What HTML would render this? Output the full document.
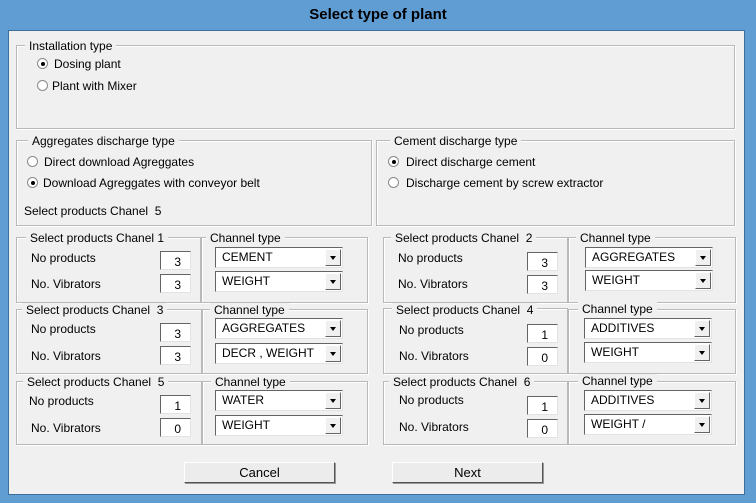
<!DOCTYPE html>
<html><head><style>
body{margin:0;width:756px;height:503px;background:#5f9dd3;font-family:"Liberation Sans",sans-serif;font-size:12px;color:#000;position:relative;overflow:hidden}
#client{position:absolute;left:8px;top:30px;width:735px;height:463px;background:#f0f0f0;border:1px solid #3c6f9c}
.title{position:absolute;left:0;width:756px;top:6px;text-align:center;font-weight:bold;font-size:15px;color:#000}
.g{position:absolute;box-sizing:border-box;border:1px solid #b9b9b9;box-shadow:inset 1px 1px 0 #fff,1px 1px 0 #fff}
.l{position:absolute;background:#f0f0f0;padding:0 4px;white-space:nowrap;line-height:14px}
.t{position:absolute;white-space:nowrap;line-height:14px}
.in{position:absolute;background:#fff;border:1px solid #646464;border-right-color:#e3e3e3;border-bottom-color:#e3e3e3;text-align:right;box-sizing:border-box;width:31px;height:19px;padding:3px 9px 0 0;line-height:14px}
.cb{position:absolute;width:128px;height:21px;box-sizing:border-box;background:#fff;border:1px solid #646464;border-right-color:#e3e3e3;border-bottom-color:#e3e3e3;padding:2px 0 0 6px;line-height:14px}
.cb i{position:absolute;right:1px;top:1px;width:16px;height:17px;background:#f0f0f0;border:1px solid #fff;border-right-color:#646464;border-bottom-color:#646464;box-sizing:border-box}
.cb i:after{content:"";position:absolute;left:4px;top:6px;border:3px solid transparent;border-top:4px solid #000;border-bottom:0}
.r{position:absolute;width:9px;height:9px;border-radius:50%;border:1px solid #8a8a8a;background:#fff}
.r.on:after{content:"";position:absolute;left:2.5px;top:2.5px;width:4px;height:4px;border-radius:50%;background:#000}
.btn{position:absolute;width:151px;height:21px;box-sizing:border-box;background:#ececec;border:1px solid #fff;border-right-color:#555;border-bottom-color:#555;box-shadow:1px 1px 0 #999;text-align:center;line-height:19px;font-size:13px}
</style></head><body>
<div class="title">Select type of plant</div>
<div id="client"></div>

<div class="g" style="left:16px;top:45px;width:719px;height:84px"></div>
<div class="l" style="left:25px;top:39px">Installation type</div>
<div class="r on" style="left:37px;top:58px"></div><div class="t" style="left:54px;top:57px">Dosing plant</div>
<div class="r" style="left:37px;top:80px"></div><div class="t" style="left:52px;top:79px">Plant with Mixer</div>

<div class="g" style="left:16px;top:140px;width:356px;height:86px"></div>
<div class="l" style="left:28px;top:134px">Aggregates discharge type</div>
<div class="r" style="left:27px;top:156px"></div><div class="t" style="left:44px;top:155px">Direct download Agreggates</div>
<div class="r on" style="left:27px;top:177px"></div><div class="t" style="left:43px;top:176px">Download Agreggates with conveyor belt</div>
<div class="t" style="left:24px;top:204px">Select products Chanel&nbsp; 5</div>

<div class="g" style="left:376px;top:140px;width:359px;height:86px"></div>
<div class="l" style="left:390px;top:134px">Cement discharge type</div>
<div class="r on" style="left:388px;top:156px"></div><div class="t" style="left:406px;top:155px">Direct discharge cement</div>
<div class="r" style="left:388px;top:177px"></div><div class="t" style="left:406px;top:176px">Discharge cement by screw extractor</div>

<!-- row 1 -->
<div class="g" style="left:16px;top:237px;width:185px;height:66px"></div>
<div class="g" style="left:201px;top:237px;width:167px;height:66px"></div>
<div class="l" style="left:26px;top:231px">Select products Chanel 1</div>
<div class="l" style="left:206px;top:231px">Channel type</div>
<div class="t" style="left:31px;top:251px">No products</div><div class="in" style="left:160px;top:251px">3</div>
<div class="t" style="left:31px;top:277px">No. Vibrators</div><div class="in" style="left:160px;top:274px">3</div>
<div class="cb" style="left:215px;top:247px">CEMENT<i></i></div>
<div class="cb" style="left:215px;top:271px">WEIGHT<i></i></div>

<div class="g" style="left:383px;top:237px;width:185px;height:66px"></div>
<div class="g" style="left:568px;top:237px;width:168px;height:66px"></div>
<div class="l" style="left:391px;top:231px">Select products Chanel&nbsp; 2</div>
<div class="l" style="left:576px;top:231px">Channel type</div>
<div class="t" style="left:398px;top:251px">No products</div><div class="in" style="left:527px;top:252px">3</div>
<div class="t" style="left:398px;top:277px">No. Vibrators</div><div class="in" style="left:527px;top:275px">3</div>
<div class="cb" style="left:585px;top:247px">AGGREGATES<i></i></div>
<div class="cb" style="left:585px;top:270px">WEIGHT<i></i></div>

<!-- row 2 -->
<div class="g" style="left:16px;top:309px;width:186px;height:65px"></div>
<div class="g" style="left:202px;top:309px;width:166px;height:65px"></div>
<div class="l" style="left:22px;top:303px">Select products Chanel&nbsp; 3</div>
<div class="l" style="left:210px;top:303px">Channel type</div>
<div class="t" style="left:31px;top:322px">No products</div><div class="in" style="left:160px;top:323px">3</div>
<div class="t" style="left:31px;top:349px">No. Vibrators</div><div class="in" style="left:160px;top:346px">3</div>
<div class="cb" style="left:215px;top:318px">AGGREGATES<i></i></div>
<div class="cb" style="left:215px;top:343px">DECR , WEIGHT<i></i></div>

<div class="g" style="left:383px;top:308px;width:185px;height:66px"></div>
<div class="g" style="left:568px;top:309px;width:168px;height:65px"></div>
<div class="l" style="left:392px;top:303px">Select products Chanel&nbsp; 4</div>
<div class="l" style="left:578px;top:302px">Channel type</div>
<div class="t" style="left:399px;top:323px">No products</div><div class="in" style="left:527px;top:324px">1</div>
<div class="t" style="left:399px;top:349px">No. Vibrators</div><div class="in" style="left:527px;top:347px">0</div>
<div class="cb" style="left:584px;top:318px">ADDITIVES<i></i></div>
<div class="cb" style="left:584px;top:342px">WEIGHT<i></i></div>

<!-- row 3 -->
<div class="g" style="left:16px;top:381px;width:186px;height:64px"></div>
<div class="g" style="left:202px;top:381px;width:166px;height:64px"></div>
<div class="l" style="left:23px;top:375px">Select products Chanel&nbsp; 5</div>
<div class="l" style="left:211px;top:375px">Channel type</div>
<div class="t" style="left:29px;top:394px">No products</div><div class="in" style="left:160px;top:395px">1</div>
<div class="t" style="left:31px;top:421px">No. Vibrators</div><div class="in" style="left:160px;top:418px">0</div>
<div class="cb" style="left:215px;top:390px">WATER<i></i></div>
<div class="cb" style="left:215px;top:415px">WEIGHT<i></i></div>

<div class="g" style="left:383px;top:381px;width:185px;height:64px"></div>
<div class="g" style="left:568px;top:381px;width:168px;height:64px"></div>
<div class="l" style="left:389px;top:375px">Select products Chanel&nbsp; 6</div>
<div class="l" style="left:578px;top:374px">Channel type</div>
<div class="t" style="left:399px;top:393px">No products</div><div class="in" style="left:527px;top:396px">1</div>
<div class="t" style="left:399px;top:420px">No. Vibrators</div><div class="in" style="left:527px;top:419px">0</div>
<div class="cb" style="left:584px;top:390px">ADDITIVES<i></i></div>
<div class="cb" style="left:584px;top:414px">WEIGHT /<i></i></div>

<div class="btn" style="left:184px;top:462px">Cancel</div>
<div class="btn" style="left:392px;top:462px">Next</div>
</body></html>
